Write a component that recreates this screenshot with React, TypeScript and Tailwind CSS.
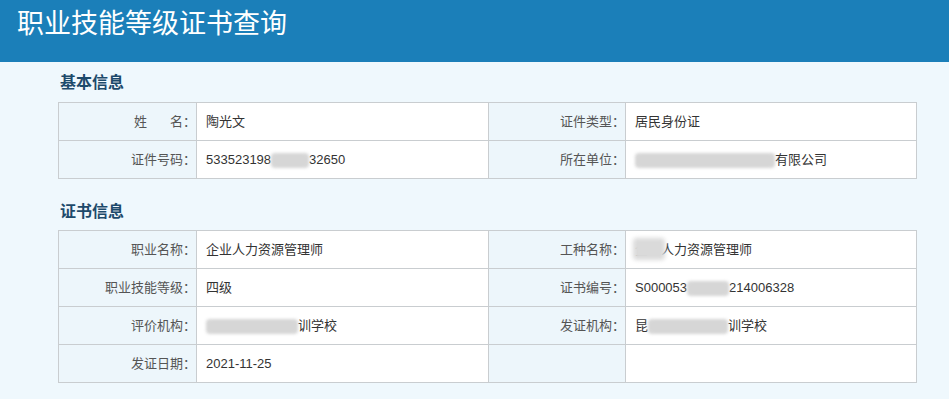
import React from "react";

// Grey redaction smudge placed inline with the text
const Smudge: React.FC<{ w: string }> = ({ w }) => (
  <span className={`inline-block h-[15px] align-middle rounded-[4px] bg-[#d6d6d6] blur-[1.5px] ${w}`} />
);

type Cell = { label: React.ReactNode; value: React.ReactNode };

const InfoTable: React.FC<{ rows: [Cell, Cell][] }> = ({ rows }) => (
  <table className="w-[858px] table-fixed border-collapse text-[13px]">
    <colgroup>
      <col className="w-[138px]" />
      <col className="w-[292px]" />
      <col className="w-[137px]" />
      <col className="w-[291px]" />
    </colgroup>
    <tbody>
      {rows.map((row, i) => (
        <tr key={i} className="h-[38px]">
          {row.map((c, j) => (
            <React.Fragment key={j}>
              <td className="border border-[#c9cdd0] bg-[#edf6fb] pr-0 text-right text-[#555]">
                {c.label}
              </td>
              <td className="border border-[#c9cdd0] bg-white pl-[9px] text-[#333] whitespace-nowrap">
                {c.value}
              </td>
            </React.Fragment>
          ))}
        </tr>
      ))}
    </tbody>
  </table>
);

export default function App() {
  const basic: [Cell, Cell][] = [
    [
      {
        label: (
          <>
            姓<span className="inline-block w-[23px]" />名：
          </>
        ),
        value: "陶光文",
      },
      { label: "证件类型：", value: "居民身份证" },
    ],
    [
      {
        label: "证件号码：",
        value: (
          <>
            533523198<Smudge w="w-[38px]" />32650
          </>
        ),
      },
      {
        label: "所在单位：",
        value: (
          <>
            <Smudge w="w-[140px]" />有限公司
          </>
        ),
      },
    ],
  ];

  const cert: [Cell, Cell][] = [
    [
      { label: "职业名称：", value: "企业人力资源管理师" },
      {
        label: "工种名称：",
        value: (
          <span className="relative">
            企业人力资源管理师
            <span className="absolute -left-[2px] top-[-4px] h-[22px] w-[32px] rounded-[4px] bg-[#dadada] blur-[2px]" />
          </span>
        ),
      },
    ],
    [
      { label: "职业技能等级：", value: "四级" },
      {
        label: "证书编号：",
        value: (
          <>
            S000053<Smudge w="w-[42px]" />214006328
          </>
        ),
      },
    ],
    [
      {
        label: "评价机构：",
        value: (
          <>
            <Smudge w="w-[92px]" />训学校
          </>
        ),
      },
      {
        label: "发证机构：",
        value: (
          <>
            昆<Smudge w="w-[80px]" />训学校
          </>
        ),
      },
    ],
    [
      { label: "发证日期：", value: "2021-11-25" },
      { label: "", value: "" },
    ],
  ];

  return (
    <div
      className="min-h-[399px] w-[949px] bg-[#eff8fd]"
      style={{ fontFamily: '"Liberation Sans", "Noto Sans CJK SC", sans-serif' }}
    >
      <header className="flex h-[62px] items-center bg-[#1b7fb9] pl-[17px] pb-[14px]">
        <h1 className="text-[27px] leading-none text-white">职业技能等级证书查询</h1>
      </header>

      <div className="pl-[58px]">
        <h2 className="pt-[13px] pl-[2px] text-[16px] font-bold leading-[16px] text-[#1d4a6b]">基本信息</h2>
        <div className="mt-[11px]">
          <InfoTable rows={basic} />
        </div>

        <h2 className="pt-[25px] pl-[2px] text-[16px] font-bold leading-[16px] text-[#1d4a6b]">证书信息</h2>
        <div className="mt-[10px]">
          <InfoTable rows={cert} />
        </div>
      </div>
    </div>
  );
}
